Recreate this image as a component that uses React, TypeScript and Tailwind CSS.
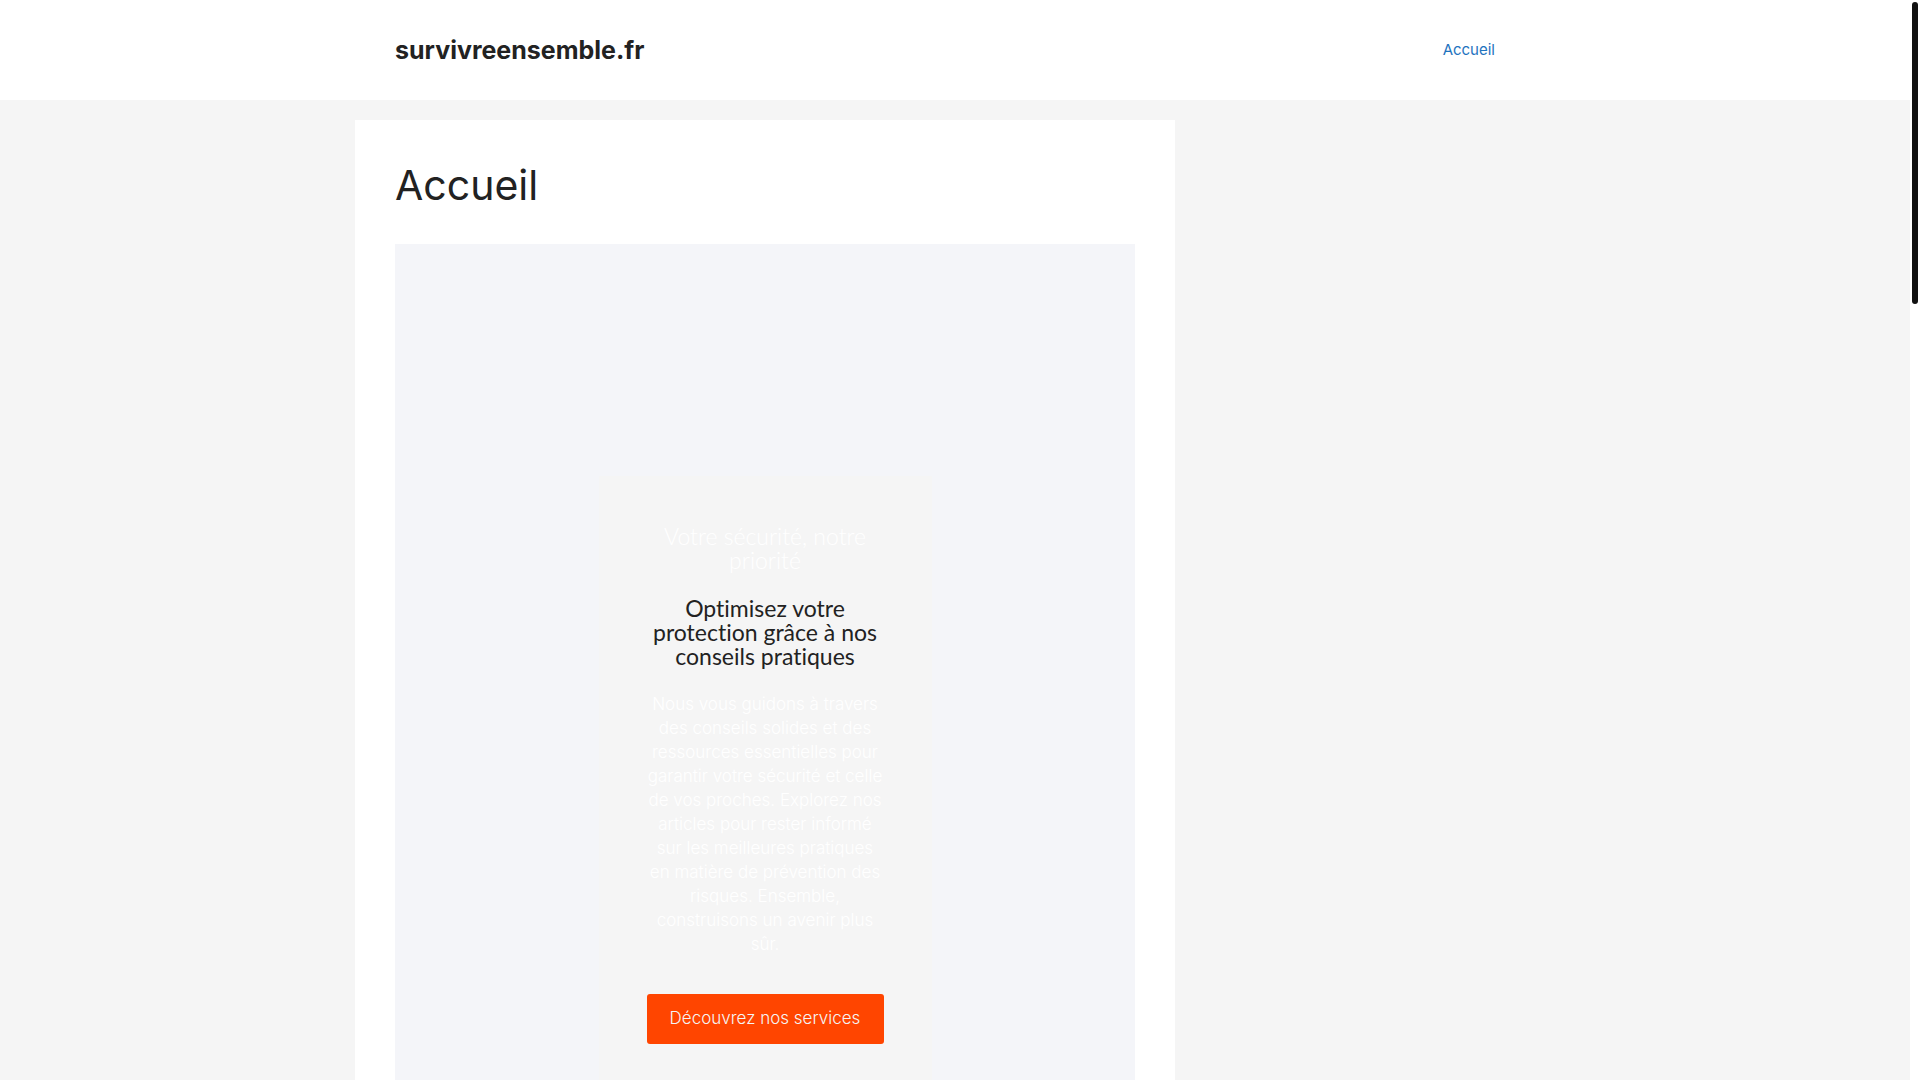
import React from "react";

interface NavItem {
  id: number;
  label: string;
  href: string;
}

const navItems: NavItem[] = [{ id: 1, label: "Accueil", href: "#accueil" }];

const heroTitle: string[] = ["Votre sécurité, notre", "priorité"];

const heroSubtitle: string[] = [
  "Optimisez votre",
  "protection grâce à nos",
  "conseils pratiques",
];

const heroText: string[] = [
  "Nous vous guidons à travers",
  "des conseils solides et des",
  "ressources essentielles pour",
  "garantir votre sécurité et celle",
  "de vos proches. Explorez nos",
  "articles pour rester informé",
  "sur les meilleures pratiques",
  "en matière de prévention des",
  "risques. Ensemble,",
  "construisons un avenir plus",
  "sûr.",
];

// One block per line, so the breaks stay the same
const Lines: React.FC<{ lines: string[] }> = ({ lines }) => (
  <>
    {lines.map((line) => (
      <span key={line} className="block whitespace-nowrap">
        {line}{" "}
      </span>
    ))}
  </>
);

const Header: React.FC = () => (
  <header className="bg-white">
    <div className="mx-auto flex h-[100px] max-w-[1200px] items-center justify-between px-10">
      <a href="#" className="text-[25px] leading-8 font-bold text-[#222222]">
        survivreensemble.fr
      </a>
      <nav>
        <ul className="flex">
          {navItems.map((item) => (
            <li key={item.id} className="flex">
              <a href={item.href} className="px-5 text-[15px] leading-6 text-[#1e73be]">
                {item.label}
              </a>
            </li>
          ))}
        </ul>
      </nav>
    </div>
  </header>
);

const Hero: React.FC = () => (
  <section className="flex h-screen items-center justify-center bg-[#f4f5f9]">
    <div className="flex w-[45%] flex-col items-center bg-[#f5f5f5] p-12 text-center">
      <h2 className="mb-6 font-['Lato',sans-serif] text-[23px] leading-6 font-light text-white [font-variant-ligatures:none]">
        <Lines lines={heroTitle} />
      </h2>
      <h2 className="mb-6 font-['Lato',sans-serif] text-[23px] leading-6 font-normal text-[#222222] [font-variant-ligatures:none]">
        <Lines lines={heroSubtitle} />
      </h2>
      <p className="mb-[38px] text-[17px] leading-6 font-light text-white">
        <Lines lines={heroText} />
      </p>
      <a
        href="#services"
        className="flex h-[50px] w-full items-center justify-center rounded-[3px] bg-[#ff4500] text-[17px] font-light whitespace-nowrap text-[#f5f5f5]"
      >
        Découvrez nos services
      </a>
    </div>
  </section>
);

const App: React.FC = () => {
  return (
    <div className="flex h-screen overflow-hidden bg-white font-['Inter',sans-serif]">
      <div className="h-full flex-1 overflow-hidden bg-[#f5f5f5]">
        <Header />
        <main id="accueil" className="mx-auto mt-5 max-w-[1200px]">
          <article className="mr-[380px] bg-white p-10">
            <h1 className="mb-[34px] text-[41px] leading-[50px] text-[#222222]">
              Accueil
            </h1>
            <Hero />
          </article>
        </main>
      </div>

      {/* Scrollbar */}
      <div className="h-full w-2.5 px-0.5 py-0.5">
        <div className="h-[302px] w-1.5 rounded-full bg-[#111111]" />
      </div>
    </div>
  );
};

export default App;
